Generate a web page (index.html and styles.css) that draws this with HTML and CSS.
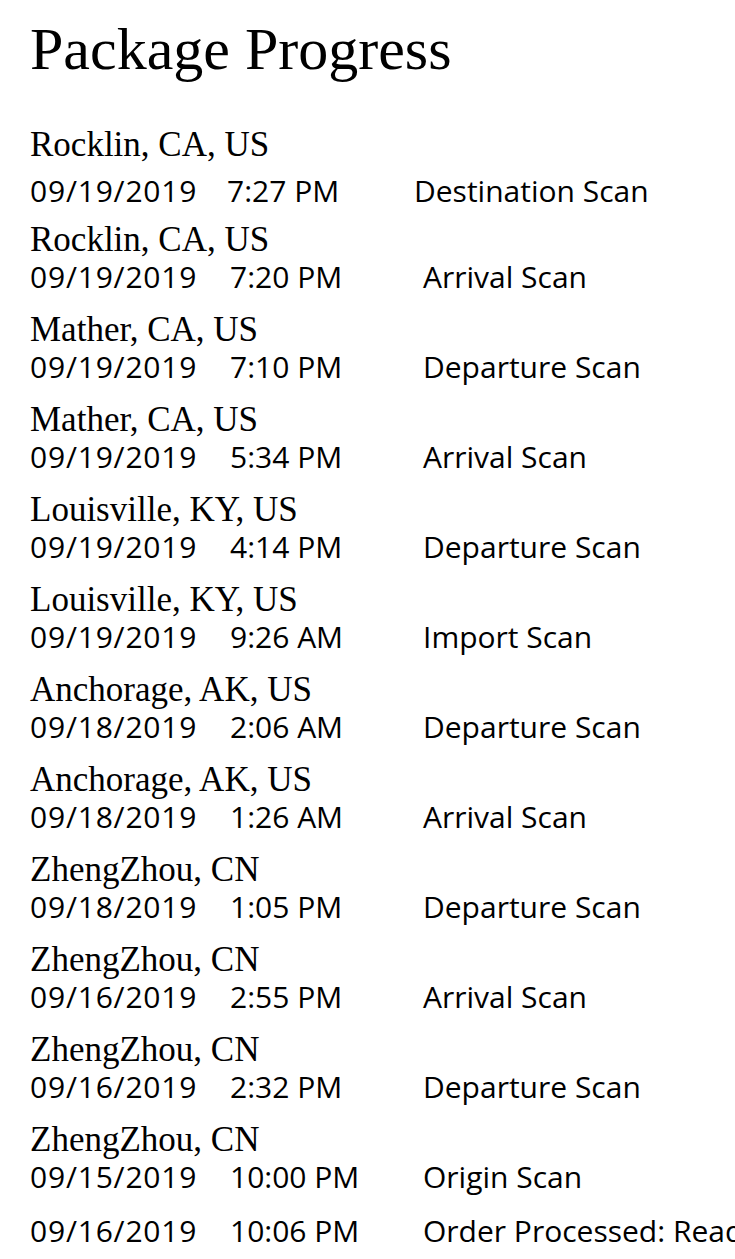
FILE: index.html
```html
<!DOCTYPE html>
<html lang="en">
<head>
    <meta charset="UTF-8">
    <title>Package Progress</title>
    <link rel="stylesheet" href="styles.css">
</head>
<body>
    <div class="container">
        <h1 class="page-title">Package Progress</h1>

        <div class="progress-list">
            <div class="entry entry--first">
                <div class="location">Rocklin, CA, US</div>
                <div class="scan-line">
                    <span class="scan-date">09/19/2019</span>
                    <span class="scan-time">7:27 PM</span>
                    <span class="scan-status">Destination Scan</span>
                </div>
            </div>
            <div class="entry">
                <div class="location">Rocklin, CA, US</div>
                <div class="scan-line">
                    <span class="scan-date">09/19/2019</span>
                    <span class="scan-time">7:20 PM</span>
                    <span class="scan-status">Arrival Scan</span>
                </div>
            </div>
            <div class="entry">
                <div class="location">Mather, CA, US</div>
                <div class="scan-line">
                    <span class="scan-date">09/19/2019</span>
                    <span class="scan-time">7:10 PM</span>
                    <span class="scan-status">Departure Scan</span>
                </div>
            </div>
            <div class="entry">
                <div class="location">Mather, CA, US</div>
                <div class="scan-line">
                    <span class="scan-date">09/19/2019</span>
                    <span class="scan-time">5:34 PM</span>
                    <span class="scan-status">Arrival Scan</span>
                </div>
            </div>
            <div class="entry">
                <div class="location">Louisville, KY, US</div>
                <div class="scan-line">
                    <span class="scan-date">09/19/2019</span>
                    <span class="scan-time">4:14 PM</span>
                    <span class="scan-status">Departure Scan</span>
                </div>
            </div>
            <div class="entry">
                <div class="location">Louisville, KY, US</div>
                <div class="scan-line">
                    <span class="scan-date">09/19/2019</span>
                    <span class="scan-time">9:26 AM</span>
                    <span class="scan-status">Import Scan</span>
                </div>
            </div>
            <div class="entry">
                <div class="location">Anchorage, AK, US</div>
                <div class="scan-line">
                    <span class="scan-date">09/18/2019</span>
                    <span class="scan-time">2:06 AM</span>
                    <span class="scan-status">Departure Scan</span>
                </div>
            </div>
            <div class="entry">
                <div class="location">Anchorage, AK, US</div>
                <div class="scan-line">
                    <span class="scan-date">09/18/2019</span>
                    <span class="scan-time">1:26 AM</span>
                    <span class="scan-status">Arrival Scan</span>
                </div>
            </div>
            <div class="entry">
                <div class="location">ZhengZhou, CN</div>
                <div class="scan-line">
                    <span class="scan-date">09/18/2019</span>
                    <span class="scan-time">1:05 PM</span>
                    <span class="scan-status">Departure Scan</span>
                </div>
            </div>
            <div class="entry">
                <div class="location">ZhengZhou, CN</div>
                <div class="scan-line">
                    <span class="scan-date">09/16/2019</span>
                    <span class="scan-time">2:55 PM</span>
                    <span class="scan-status">Arrival Scan</span>
                </div>
            </div>
            <div class="entry">
                <div class="location">ZhengZhou, CN</div>
                <div class="scan-line">
                    <span class="scan-date">09/16/2019</span>
                    <span class="scan-time">2:32 PM</span>
                    <span class="scan-status">Departure Scan</span>
                </div>
            </div>
            <div class="entry">
                <div class="location">ZhengZhou, CN</div>
                <div class="scan-line">
                    <span class="scan-date">09/15/2019</span>
                    <span class="scan-time">10:00 PM</span>
                    <span class="scan-status">Origin Scan</span>
                </div>
            </div>
            <div class="entry">
                <div class="scan-line">
                    <span class="scan-date">09/16/2019</span>
                    <span class="scan-time">10:06 PM</span>
                    <span class="scan-status">Order Processed: Ready for UPS</span>
                </div>
            </div>
        </div>
    </div>
</body>
</html>
```

FILE: styles.css
```css
* {
    margin: 0;
    padding: 0;
    box-sizing: border-box;
}

body {
    width: 735px;
    height: 1259px;
    overflow: hidden;
    background: #fff;
    color: #000;
}

.container {
    padding: 19px 0 0 30px;
    display: flex;
    flex-direction: column;
}

.page-title {
    font-family: "Liberation Serif", serif;
    font-size: 60px;
    font-weight: normal;
    line-height: 60px;
    margin-bottom: 48px;
}

/* Progress list */
.progress-list {
    display: flex;
    flex-direction: column;
    gap: 16px;
}

.location {
    font-family: "Liberation Serif", serif;
    font-size: 35px;
    line-height: 36px;
    white-space: nowrap;
}

.scan-line {
    display: grid;
    grid-template-columns: 200px 193px auto;
    font-family: "Open Sans", sans-serif;
    font-size: 30px;
    line-height: 38px;
    white-space: nowrap;
}

.scan-date {
    letter-spacing: 0.8px;
}

.entry--first {
    margin-bottom: -4px;
}

.entry--first .scan-line {
    margin-top: 9px;
    grid-template-columns: 197px 187px auto;
}
```
